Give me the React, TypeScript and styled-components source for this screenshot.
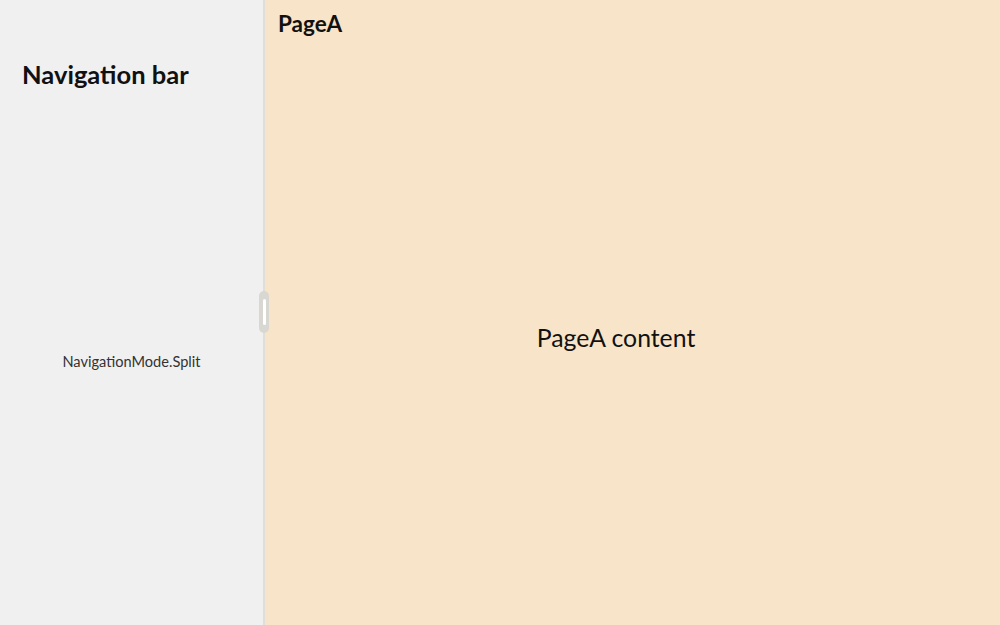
import React from 'react'
import styled, { createGlobalStyle } from 'styled-components'

const GlobalStyle = createGlobalStyle`
  html, body {
    margin: 0;
    padding: 0;
  }
  body {
    font-family: 'Lato', 'Noto Sans', sans-serif;
    color: #111;
  }
`

const Screen = styled.div`
  display: flex;
  width: 1000px;
  height: 625px;
  overflow: hidden;
`

const NavBar = styled.aside`
  position: relative;
  display: flex;
  flex-direction: column;
  width: 263px;
  background: #f0f0f0;
  border-right: 2px solid #e0ded9;
`

const NavTitle = styled.h1`
  margin: 0;
  padding: 58px 0 0 22px;
  font-size: 25.5px;
  line-height: 32px;
  font-weight: 700;
`

const NavBody = styled.div`
  flex: 1;
  display: flex;
  align-items: center;
  justify-content: center;
  padding-top: 8px;
`

const ModeLabel = styled.span`
  font-size: 14.6px;
  color: #333;
`

const Handle = styled.div`
  position: absolute;
  top: 291px;
  right: -6px;
  width: 10px;
  height: 42px;
  border-radius: 5px;
  background: #d9d7d1;
  display: flex;
  align-items: center;
  justify-content: center;
  z-index: 2;

  &::after {
    content: '';
    width: 3px;
    height: 26px;
    border-radius: 2px;
    background: #fff;
  }
`

const Page = styled.main`
  flex: 1;
  display: flex;
  flex-direction: column;
  background: #f8e4c8;
`

const PageHeader = styled.header`
  height: 56px;
  padding: 10px 0 0 13px;
  box-sizing: border-box;
`

const PageTitle = styled.h2`
  margin: 0;
  font-size: 22.5px;
  line-height: 28px;
  font-weight: 700;
`

const PageBody = styled.div`
  flex: 1;
  display: flex;
  align-items: center;
  justify-content: center;
  padding: 0 33px 6px 0;
`

const PageText = styled.span`
  font-size: 24.8px;
  color: #111;
`

export default function App() {
  return (
    <>
      <GlobalStyle />
      <Screen>
        <NavBar>
          <NavTitle>Navigation bar</NavTitle>
          <NavBody>
            <ModeLabel>NavigationMode.Split</ModeLabel>
          </NavBody>
          <Handle />
        </NavBar>
        <Page>
          <PageHeader>
            <PageTitle>PageA</PageTitle>
          </PageHeader>
          <PageBody>
            <PageText>PageA content</PageText>
          </PageBody>
        </Page>
      </Screen>
    </>
  )
}
